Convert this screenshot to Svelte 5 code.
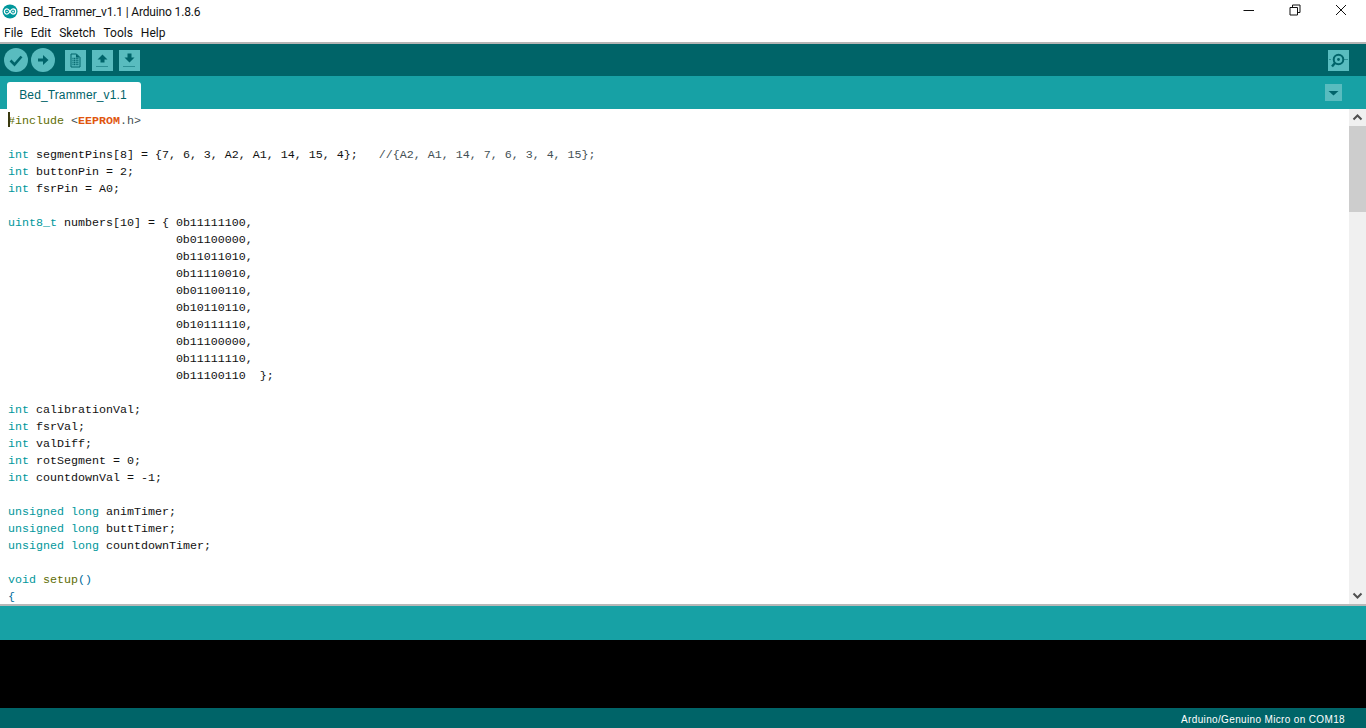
<script>
    const k = (t) => ({ c: "kw", t })
    const p = (t) => ({ c: "", t })

    const digits = ["01100000", "11011010", "11110010", "01100110", "10110110", "10111110", "11100000", "11111110"]

    const lines = [
        [{ c: "pre", t: "#include" }, p(" "), { c: "op", t: "<" }, { c: "lib", t: "EEPROM" }, { c: "op", t: ".h>" }],
        [],
        [k("int"), p(" segmentPins[8] = {7, 6, 3, A2, A1, 14, 15, 4};   "), { c: "cm", t: "//{A2, A1, 14, 7, 6, 3, 4, 15};" }],
        [k("int"), p(" buttonPin = 2;")],
        [k("int"), p(" fsrPin = A0;")],
        [],
        [k("uint8_t"), p(" numbers[10] = { 0b11111100,")],
        ...digits.map((d) => [p(" ".repeat(24) + "0b" + d + ",")]),
        [p(" ".repeat(24) + "0b11100110  };")],
        [],
        [k("int"), p(" calibrationVal;")],
        [k("int"), p(" fsrVal;")],
        [k("int"), p(" valDiff;")],
        [k("int"), p(" rotSegment = 0;")],
        [k("int"), p(" countdownVal = -1;")],
        [],
        [k("unsigned"), p(" "), k("long"), p(" animTimer;")],
        [k("unsigned"), p(" "), k("long"), p(" buttTimer;")],
        [k("unsigned"), p(" "), k("long"), p(" countdownTimer;")],
        [],
        [k("void"), p(" "), { c: "pre", t: "setup" }, { c: "kw2", t: "()" }],
        [{ c: "kw2", t: "{" }]
    ]

    const menus = ["File", "Edit", "Sketch", "Tools", "Help"]
</script>

<div class="window">
    <header class="titlebar">
        <svg class="logo" viewBox="0 0 16 16">
            <ellipse cx="8" cy="8" rx="8" ry="7.500" fill="#00979c" />
            <path d="M4.800 5.200a2.800 2.800 0 1 0 0 5.600c1.500 0 2.300-1.400 3.200-2.800s1.700-2.800 3.200-2.800a2.800 2.800 0 1 1 0 5.600c-1.500 0-2.300-1.400-3.200-2.800s-1.700-2.800-3.200-2.800z" fill="none" stroke="#fff" stroke-width="1.300" />
            <path d="M3.500 8h2.400M10 8h2.400M11.200 6.800v2.400" stroke="#fff" stroke-width="0.700" fill="none" />
        </svg>
        <span class="title">Bed_Trammer_v1.1 | Arduino 1.8.6</span>
        <div class="winbtns">
            <svg viewBox="0 0 12 12"><path d="M0.500 6.500h10.500" stroke="#111" fill="none" /></svg>
            <svg viewBox="0 0 12 12"><path d="M1 3.500h7.500v7.500h-7.500zM3.500 3.500v-2.500h7.500v7.500h-2.500" stroke="#111" fill="none" /></svg>
            <svg viewBox="0 0 12 12"><path d="M1 1l10 10M11 1l-10 10" stroke="#111" fill="none" /></svg>
        </div>
    </header>

    <nav class="menubar">
        {#each menus as m}
            <span>{m}</span>
        {/each}
    </nav>

    <div class="toolbar">
        <button class="round" aria-label="Verify">
            <svg viewBox="0 0 24 24"><path d="M6.500 12.500l4 4 7-8" fill="none" stroke="#00646a" stroke-width="2.600" /></svg>
        </button>
        <button class="round second" aria-label="Upload">
            <svg viewBox="0 0 24 24"><path d="M7 10.500h5v-3.500l5.500 5-5.500 5v-3.500h-5z" fill="#00646a" /></svg>
        </button>
        <button class="square first" aria-label="New">
            <svg viewBox="0 0 21 21"><path d="M6 4h5.500l3.500 3.500v9.500h-9z" fill="none" stroke="#00646a" stroke-width="1" /><path d="M7.500 8.500h6.500M7.500 10.500h6.500M7.500 12.500h6.500M7.500 14.500h6.500" stroke="#00646a" stroke-width="1.300" stroke-dasharray="1 0.600" /><path d="M11 4v3.500h4z" fill="#00646a" /></svg>
        </button>
        <button class="square" aria-label="Open">
            <svg viewBox="0 0 21 21"><path d="M10.500 4.500l5 5h-3v3h-4v-3h-3z" fill="#00646a" /><path d="M4.500 16.500h12" stroke="#00646a" stroke-dasharray="1 1" /></svg>
        </button>
        <button class="square" aria-label="Save">
            <svg viewBox="0 0 21 21"><path d="M8.500 3.500h4v4h3l-5 5-5-5h3z" fill="#00646a" /><path d="M4.500 16.500h12" stroke="#00646a" stroke-dasharray="1 1" /></svg>
        </button>
        <button class="square monitor" aria-label="Serial monitor">
            <svg viewBox="0 0 21 21"><circle cx="10.500" cy="9.500" r="4.800" fill="none" stroke="#00646a" stroke-width="2" /><circle cx="10.500" cy="9.500" r="1.400" fill="#00646a" /><path d="M7 13l-3 3.500" stroke="#00646a" stroke-width="2.400" /><path d="M1.500 9.500h2M16.500 9.500h3" stroke="#00646a" stroke-dasharray="1 1" /></svg>
        </button>
    </div>

    <div class="tabbar">
        <div class="tab">Bed_Trammer_v1.1</div>
        <button class="tabmenu" aria-label="Tab menu">
            <svg viewBox="0 0 17 17"><path d="M3.500 7h10l-5 4.500z" fill="#00646a" /></svg>
        </button>
    </div>

    <div class="editor">
        <div class="code">
            <span class="caret"></span>
            {#each lines as line}
                <div class="line">{#each line as tok}<span class={tok.c}>{tok.t}</span>{/each}</div>
            {/each}
        </div>
        <div class="scrollbar">
            <svg class="arrow" viewBox="0 0 17 17"><path d="M4.500 10.500l4-4 4 4" fill="none" stroke="#505050" stroke-width="2" /></svg>
            <div class="track"><div class="thumb"></div></div>
            <svg class="arrow" viewBox="0 0 17 17"><path d="M4.500 6.500l4 4 4-4" fill="none" stroke="#505050" stroke-width="2" /></svg>
        </div>
    </div>

    <div class="status"></div>
    <div class="console"></div>
    <footer class="footer">Arduino/Genuino Micro on COM18</footer>
</div>

<style>
    :global(body) {
        margin: 0;
        background: #fff;
    }

    .window {
        width: 1366px;
        height: 728px;
        display: flex;
        flex-direction: column;
        overflow: hidden;
        font-family: Roboto, "Liberation Sans", sans-serif;
    }

    .titlebar {
        height: 22px;
        display: flex;
        align-items: center;
        padding-left: 2px;
        flex: none;
    }

    .logo {
        width: 16px;
        height: 15px;
        margin-right: 5px;
    }

    .title {
        font-size: 12px;
        color: #111;
        letter-spacing: -0.16px;
        padding-top: 1px;
    }

    .winbtns {
        margin-left: auto;
        display: flex;
        gap: 34px;
        padding-right: 19px;
        padding-bottom: 2px;
    }

    .winbtns svg {
        width: 12px;
        height: 12px;
    }

    .menubar {
        height: 20px;
        display: flex;
        gap: 8px;
        align-items: center;
        padding: 2px 0 0 4px;
        box-sizing: border-box;
        font-size: 12px;
        color: #111;
        flex: none;
    }

    .toolbar {
        height: 32px;
        flex: none;
        background: #006468;
        border-top: 2px solid #b5b5b5;
        display: flex;
        align-items: center;
        padding-left: 4px;
        padding-right: 17px;
    }

    button {
        border: none;
        padding: 0;
        display: block;
        background: #59bcbf;
    }

    button svg {
        display: block;
        width: 100%;
        height: 100%;
    }

    .round {
        width: 24px;
        height: 24px;
        border-radius: 50%;
    }

    .round.second {
        margin-left: 3px;
    }

    .square {
        width: 21px;
        height: 21px;
        margin-left: 6px;
    }

    .square.first {
        margin-left: 10px;
    }

    .square.monitor {
        margin-left: auto;
    }

    .tabbar {
        height: 33px;
        flex: none;
        background: #17a1a5;
        display: flex;
        align-items: flex-end;
        padding-left: 7px;
        padding-right: 24px;
    }

    .tab {
        width: 132px;
        padding-right: 2px;
        height: 27px;
        background: #fff;
        border-radius: 3px 3px 0 0;
        color: #00646a;
        font-family: "Liberation Sans", sans-serif;
        font-size: 12px;
        letter-spacing: 0.12px;
        text-align: center;
        line-height: 26px;
    }

    .tabmenu {
        width: 17px;
        height: 17px;
        margin-left: auto;
        margin-bottom: 8px;
        background: #59bcbf;
    }

    .editor {
        height: 495px;
        flex: none;
        display: flex;
        background: #fff;
        border-bottom: 2px solid #b8b8b8;
        box-sizing: content-box;
    }

    .code {
        flex: 1;
        position: relative;
        overflow: hidden;
        padding: 4px 0 0 8px;
        font-family: "Liberation Mono", monospace;
        font-size: 11.67px;
        line-height: 17px;
        color: #111;
    }

    .line {
        height: 17px;
        white-space: pre;
    }

    .caret {
        position: absolute;
        left: 8px;
        top: 3px;
        width: 2px;
        height: 15px;
        background: #3a3a10;
    }

    .kw {
        color: #00979c;
    }

    .kw2 {
        color: #006b9c;
    }

    .pre {
        color: #5e6d03;
    }

    .lib {
        color: #e0560f;
        font-weight: bold;
    }

    .op {
        color: #434f54;
    }

    .cm {
        color: #434f54;
    }

    .scrollbar {
        width: 17px;
        display: flex;
        flex-direction: column;
        background: #f0f0f0;
    }

    .arrow {
        width: 17px;
        height: 17px;
        flex: none;
        display: block;
    }

    .track {
        flex: 1;
    }

    .thumb {
        height: 86px;
        background: #cdcdcd;
    }

    .status {
        height: 34px;
        flex: none;
        background: #17a1a5;
    }

    .console {
        height: 68px;
        flex: none;
        background: #000;
    }

    .footer {
        height: 20px;
        flex: none;
        background: #006468;
        color: #fff;
        font-family: "Liberation Sans", sans-serif;
        font-size: 10px;
        letter-spacing: 0.35px;
        line-height: 24px;
        text-align: right;
        padding-right: 21px;
    }
</style>
